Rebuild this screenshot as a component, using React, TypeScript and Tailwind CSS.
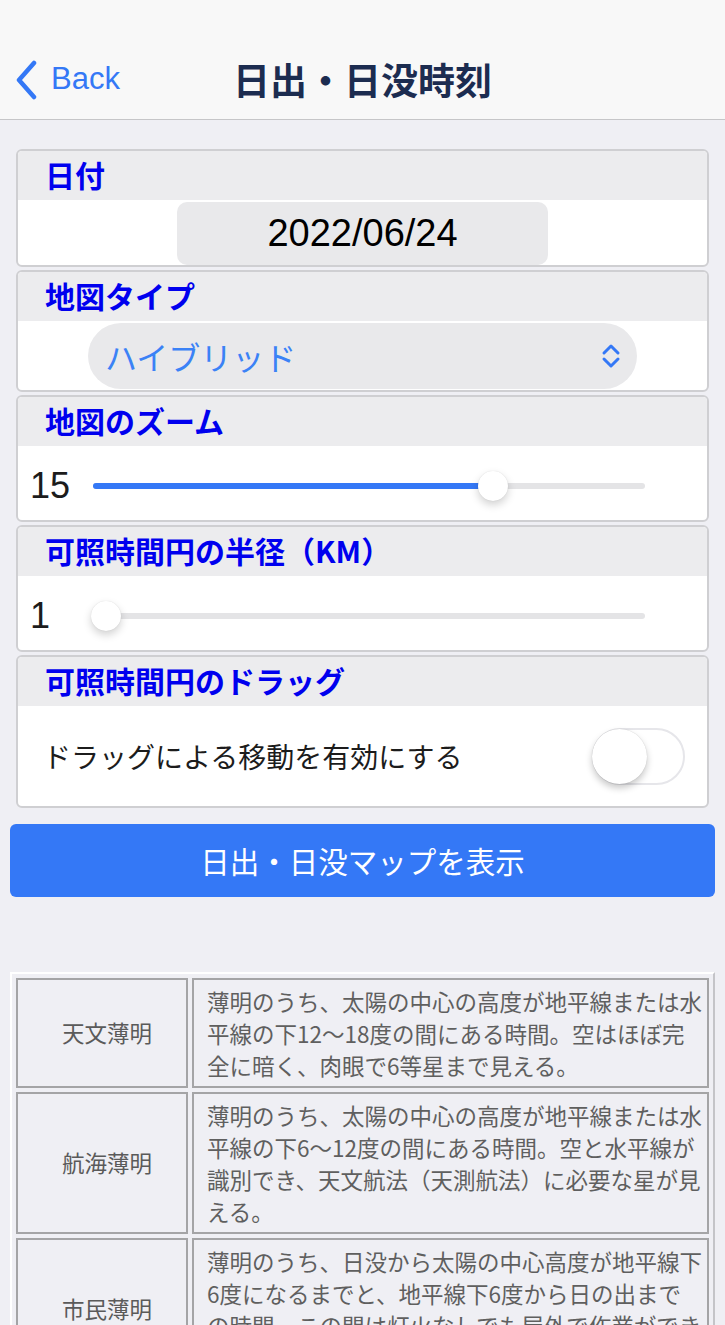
import React from "react";

const jp = { fontFamily: '"Noto Sans CJK JP", "Noto Sans", sans-serif' };
const latin = { fontFamily: '"Liberation Sans", "Noto Sans CJK JP", sans-serif' };

/**
 * Grouped settings card with a grey title strip.
 */
const Section: React.FC<{ title: string; children: React.ReactNode }> = ({ title, children }) => (
  <div className="overflow-hidden rounded-[6px] border-2 border-[#cfcfd2] bg-white">
    <div
      className="flex h-[49px] items-center bg-[#ececee] pb-[3px] pl-[27px] text-[30px] font-bold text-[#0000ee]"
      style={jp}
    >
      {title}
    </div>
    {children}
  </div>
);

const Slider: React.FC<{ value: number; percent: number }> = ({ value, percent }) => (
  <div className="flex h-[74px] items-center pl-[12px] pt-[6px]">
    <div className="w-[63px] text-[36px] leading-none text-[#1c1c1c]" style={latin}>
      {value}
    </div>
    <div className="relative h-[6px] w-[552px] rounded-full bg-[#e4e4e6]">
      <div className="h-full rounded-full bg-[#3478f6]" style={{ width: `${percent}%` }} />
      <div
        className="absolute top-1/2 h-[30px] w-[30px] -translate-x-1/2 -translate-y-1/2 rounded-full bg-white shadow-[0_4px_8px_rgba(0,0,0,0.18),0_0_1px_rgba(0,0,0,0.15)]"
        style={{ left: `${percent}%` }}
      />
    </div>
  </div>
);

const rows = [
  {
    name: "天文薄明",
    lines: [
      "薄明のうち、太陽の中心の高度が地平線または水",
      "平線の下12～18度の間にある時間。空はほぼ完",
      "全に暗く、肉眼で6等星まで見える。",
    ],
  },
  {
    name: "航海薄明",
    lines: [
      "薄明のうち、太陽の中心の高度が地平線または水",
      "平線の下6～12度の間にある時間。空と水平線が",
      "識別でき、天文航法（天測航法）に必要な星が見",
      "える。",
    ],
  },
  {
    name: "市民薄明",
    lines: [
      "薄明のうち、日没から太陽の中心高度が地平線下",
      "6度になるまでと、地平線下6度から日の出まで",
      "の時間。この間は灯火なしでも屋外で作業ができ",
      "る。",
    ],
  },
];

export default function App() {
  return (
    <div className="min-h-[1325px] bg-[#efeff4]" style={jp}>
      {/* Navigation bar */}
      <header className="h-[120px] border-b border-[#c6c6c8] bg-[#f8f8f8] pt-[40px]">
        <div className="grid h-[79px] grid-cols-[1fr_auto_1fr] items-center">
          <div className="flex items-center pl-[14px] text-[#3478f6]">
            <svg width="24" height="40" viewBox="0 0 24 40" fill="none" aria-hidden="true">
              <polyline
                points="20,3 5,20 20,37"
                stroke="currentColor"
                strokeWidth={4.5}
                strokeLinecap="round"
                strokeLinejoin="round"
              />
            </svg>
            <span className="ml-[13px] text-[31px]" style={latin}>
              Back
            </span>
          </div>
          <h1 className="text-[37px] font-bold leading-none text-[#1c2c50]">日出・日没時刻</h1>
          <div />
        </div>
      </header>

      <main className="px-[10px] pt-[29px]">
        <div className="flex flex-col gap-[3px] px-[6px]">
          <Section title="日付">
            <div className="pb-0 pt-[2px]">
              <div
                className="mx-auto flex h-[63px] w-[371px] items-center justify-center rounded-[10px] bg-[#e9e9eb] text-[38px] text-black"
                style={latin}
              >
                2022/06/24
              </div>
            </div>
          </Section>

          <Section title="地図タイプ">
            <div className="pb-[1px] pt-[2px]">
              <div className="mx-auto flex h-[66px] w-[549px] items-center justify-between rounded-full bg-[#e9e9eb] pl-[17px] pr-[14px]">
                <span className="text-[32px] text-[#3b82f6]">ハイブリッド</span>
                <svg width="24" height="26" viewBox="0 0 24 26" fill="none" aria-hidden="true">
                  <path
                    d="M5 10 L12 3 L19 10 M5 16 L12 23 L19 16"
                    stroke="#3478f6"
                    strokeWidth={3}
                    strokeLinecap="round"
                    strokeLinejoin="round"
                  />
                </svg>
              </div>
            </div>
          </Section>

          <Section title="地図のズーム">
            <Slider value={15} percent={72.5} />
          </Section>

          <Section title="可照時間円の半径（KM）">
            <Slider value={1} percent={2.3} />
          </Section>

          <Section title="可照時間円のドラッグ">
            <div className="flex h-[100px] items-center justify-between pl-[25px] pr-[22px]">
              <span className="text-[28px] text-[#1c1c1c]">ドラッグによる移動を有効にする</span>
              <div className="relative h-[57px] w-[93px] rounded-full border-2 border-[#e6e6ea] bg-white">
                <div className="absolute left-[-2px] top-[-1px] h-[55px] w-[55px] rounded-full bg-white shadow-[0_4px_7px_rgba(0,0,0,0.22),0_0_1px_rgba(0,0,0,0.2)]" />
              </div>
            </div>
          </Section>
        </div>

        <button
          type="button"
          className="mt-[16px] flex h-[73px] w-full items-center justify-center rounded-[6px] bg-[#3478f6] text-[29.5px] text-white"
        >
          日出・日没マップを表示
        </button>

        <table className="mt-[75px] w-full table-fixed border-separate border-spacing-1 border-2 border-b-[#c4c4c8] border-l-white border-r-[#c4c4c8] border-t-white">
          <tbody>
            {rows.map((row) => (
              <tr key={row.name}>
                <td className="w-[172px] border-2 border-[#a4a4a6] pl-[10px] text-center align-middle text-[22.5px] text-[#5a5a5a]">
                  {row.name}
                </td>
                <td className="border-2 border-[#a4a4a6] py-[5px] pl-[13px] text-[22.5px] leading-[32px] text-[#5f5f5f]">
                  {row.lines.map((line) => (
                    <div key={line} className="whitespace-nowrap">
                      {line}
                    </div>
                  ))}
                </td>
              </tr>
            ))}
          </tbody>
        </table>
      </main>
    </div>
  );
}
